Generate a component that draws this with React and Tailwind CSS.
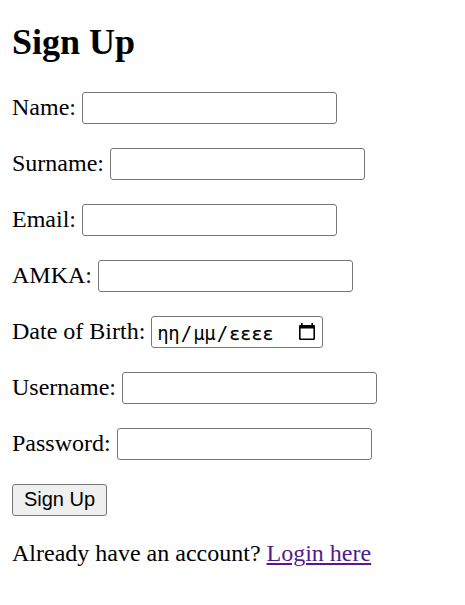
import React from "react";

const fields = [
  { label: "Name:", type: "text" },
  { label: "Surname:", type: "text" },
  { label: "Email:", type: "text" },
  { label: "AMKA:", type: "text" },
  { label: "Date of Birth:", type: "date" },
  { label: "Username:", type: "text" },
  { label: "Password:", type: "password" },
];

function DateBox() {
  return (
    <div className="flex h-8 w-[172px] items-center justify-between rounded-[3px] border border-[#767676] bg-white pl-[5px] pr-[7px]">
      <div className="flex items-baseline pt-0.5 font-['DejaVu_Sans_Mono',monospace] text-[19px] leading-none tracking-[-0.4px]">
        <span className="w-[22px]">ηη</span>
        <span className="w-[14px] text-center">/</span>
        <span className="w-[22px]">μμ</span>
        <span className="w-[14px] text-center">/</span>
        <span className="w-[46px] text-[18px] tracking-[0.2px] [-webkit-text-stroke:0.25px_black]">εεεε</span>
      </div>
      <svg className="mb-px" width="16" height="17" viewBox="0 0 16 17" aria-hidden="true">
        <path d="M2 0h1.6v2h8.8V0H14v2h.8Q16 2 16 3.2v12.6Q16 17 14.8 17H1.2Q0 17 0 15.8V3.2Q0 2 1.2 2H2zM1.6 5.5v9.9h12.8V5.5z" fillRule="evenodd" />
      </svg>
    </div>
  );
}

export default function App() {
  return (
    <main className="min-h-screen bg-white px-3 pt-[21px] font-['Liberation_Serif',serif] text-[24px] leading-7 text-black">
      <h1 className="mb-7 text-[36px] font-bold leading-[43px]">Sign Up</h1>
      <form className="flex flex-col gap-6" onSubmit={(e) => e.preventDefault()}>
        {fields.map((f) => (
          <label key={f.label} className="flex h-8 items-center gap-[6px]">
            <span className="whitespace-nowrap pb-0.5">{f.label}</span>
            {f.type === "date" ? (
              <DateBox />
            ) : (
              <input type={f.type} className="h-8 w-[255px] rounded-[3px] border border-[#767676] bg-white px-1" />
            )}
          </label>
        ))}
        <button className="h-8 w-[95px] rounded-[3px] border border-[#767676] bg-[#efefef] pb-0.5 font-['Liberation_Sans',sans-serif] text-[20px] leading-none">Sign Up</button>
      </form>
      <p className="mt-[23px]">
        Already have an account? <a href="#" className="text-[#551a8b] underline decoration-2 underline-offset-2">Login here</a>
      </p>
    </main>
  );
}
